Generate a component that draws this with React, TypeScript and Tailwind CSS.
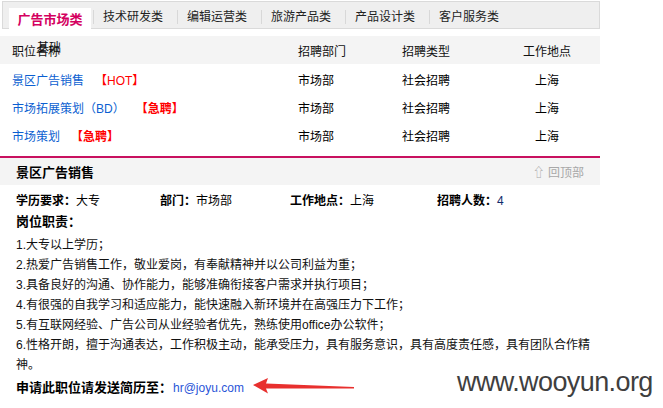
import React from "react";

const font = { fontFamily: '"Liberation Sans", Arial, "Noto Sans CJK SC", sans-serif' };

const tabs = ["技术研发类", "编辑运营类", "旅游产品类", "产品设计类", "客户服务类"];

const rows = [
  { name: "景区广告销售", tag: "【HOT】", bold: false },
  { name: "市场拓展策划（BD）", tag: "【急聘】", bold: true },
  { name: "市场策划", tag: "【急聘】", bold: true },
];

const duties = [
  "1.大专以上学历；",
  "2.热爱广告销售工作，敬业爱岗，有奉献精神并以公司利益为重；",
  "3.具备良好的沟通、协作能力，能够准确衔接客户需求并执行项目；",
  "4.有很强的自我学习和适应能力，能快速融入新环境并在高强压力下工作；",
  "5.有互联网经验、广告公司从业经验者优先，熟练使用office办公软件；",
  "6.性格开朗，擅于沟通表达，工作积极主动，能承受压力，具有服务意识，具有高度责任感，具有团队合作精神。",
];

export default function App() {
  return (
    <div className="relative w-[663px] h-[408px] overflow-hidden bg-white text-[12px] text-black" style={font}>
      <div className="w-[600px]">
        {/* Tabs */}
        <div className="mt-[1px] ml-[2px] h-[28px] bg-[#efefef] border border-[#dadada] flex items-end pl-[6px]">
          <div className="h-[21px] w-[82px] bg-white flex items-center justify-center text-[13px] font-bold text-[#d4005f] mb-[-1px] pt-[2px]">
            广告市场类
          </div>
          {tabs.map((t) => (
            <div key={t} className="flex items-center h-[27px]">
              <div className="w-px h-[14px] bg-[#d8d8d8] ml-[2px] mt-[4px]" />
              <div className="w-[81px] pl-[9px] text-[#222] pt-[5px]">{t}</div>
            </div>
          ))}
        </div>

        {/* Header */}
        <div className="mt-[7px] h-[28px] bg-[#f4f4f4] flex items-center text-[#111] pt-[3px]">
          <div className="w-[298px] pl-[12px] relative">
            <span>职位名称</span>
            <span className="absolute left-[37px] top-[-4px]">基础</span>
          </div>
          <div className="w-[104px]">招聘部门</div>
          <div className="w-[121px]">招聘类型</div>
          <div className="w-[48px] text-center">工作地点</div>
        </div>

        {/* Rows */}
        <div className="pt-[3px] pb-[5px]">
          {rows.map((r) => (
            <div key={r.name} className="h-[28px] flex items-center">
              <div className="w-[298px] pl-[12px] flex items-center">
                <span className="text-[#0b5fd1]">{r.name}</span>
                <span className={"ml-[11px] text-[#ff0000] " + (r.bold ? "font-bold" : "")}>{r.tag}</span>
              </div>
              <div className="w-[104px]">市场部</div>
              <div className="w-[121px]">社会招聘</div>
              <div className="w-[48px] text-center">上海</div>
            </div>
          ))}
        </div>
        <div className="h-[2px] bg-[#c8105f]" />

        {/* Detail header */}
        <div className="h-[27px] bg-[#f4f4f4] flex items-center justify-between pl-[16px] pr-[16px] pt-[2px]">
          <span className="text-[13px] font-bold">景区广告销售</span>
          <span className="text-[#a8a8a8]">⇧ 回顶部</span>
        </div>

        {/* Detail body */}
        <div className="pl-[16px] pr-[8px]">
          <div className="mt-[6px] h-[20px] flex items-center">
            <div className="w-[144px]"><b>学历要求：</b>大专</div>
            <div className="w-[130px]"><b>部门：</b>市场部</div>
            <div className="w-[147px]"><b>工作地点：</b>上海</div>
            <div><b>招聘人数：</b><span className="text-[#102a6b]">4</span></div>
          </div>
          <div className="h-[21px] flex items-center font-bold text-[13px] pt-[1px]">岗位职责：</div>
          <div className="mt-[3px] w-[578px] leading-[20px] text-[#111]">
            {duties.map((d) => (
              <div key={d}>{d}</div>
            ))}
          </div>
          <div className="mt-[3px] h-[20px] flex items-center">
            <span className="font-bold text-[13px]">申请此职位请发送简历至：</span>
            <span className="ml-[1px] text-[#2a55d8]">hr@joyu.com</span>
          </div>
        </div>
      </div>

      {/* Arrow */}
      <svg className="absolute left-[250px] top-[373px]" width="106" height="24" viewBox="0 0 106 24">
        <path d="M3 12 L18 5 L16 10.5 L104 14 L104 15.5 L16 15.5 L18 20.5 Z" fill="#e8302e" />
      </svg>

      {/* Watermark */}
      <div
        className="absolute left-[457px] top-[366px] text-[27px] tracking-[-0.6px] text-[#3f3f3f] leading-[32px]"
        style={{ fontFamily: '"Liberation Sans", Arial, sans-serif' }}
      >
        www.wooyun.org
      </div>
    </div>
  );
}
